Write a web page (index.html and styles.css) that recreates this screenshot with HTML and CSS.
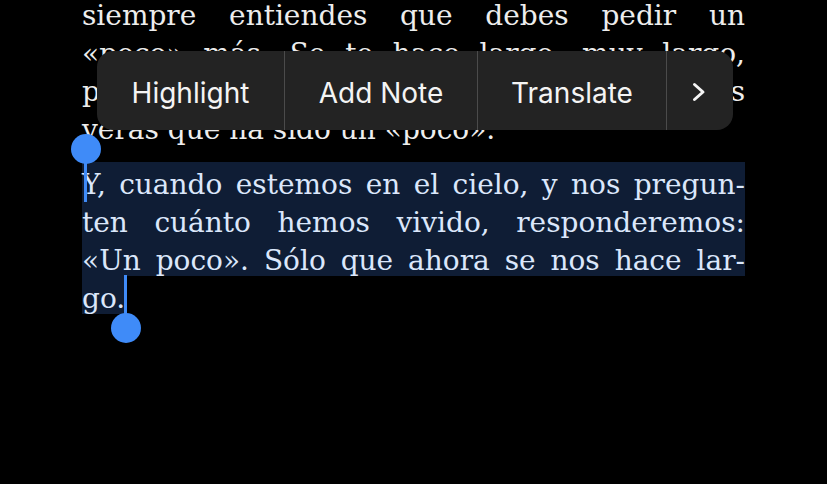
FILE: index.html
```html
<!DOCTYPE html>
<html lang="es">
<head>
<meta charset="utf-8">
<title>Reader selection</title>
<link rel="stylesheet" href="styles.css">
</head>
<body>
<main class="page">
  <p class="para first">
    <span class="line just">siempre entiendes que debes pedir un</span>
    <span class="line just">«poco» más. Se te hace largo, muy largo,</span>
    <span class="line just">pero cuando pase el tiempo y mires atrás</span>
    <span class="line">verás que ha sido un «poco».</span>
  </p>
  <p class="para selected">
    <span class="line sel just">Y, cuando estemos en el cielo, y nos pregun-</span>
    <span class="line sel just">ten cuánto hemos vivido, responderemos:</span>
    <span class="line sel just">«Un poco». Sólo que ahora se nos hace lar-</span>
    <span class="line sel last">go.</span>
  </p>

  <nav class="menu">
    <button class="item item-highlight">Highlight</button>
    <button class="item item-note">Add Note</button>
    <button class="item item-translate">Translate</button>
    <button class="item item-more" aria-label="More">
      <svg width="14" height="20" viewBox="0 0 14 20"><polyline points="2.5,2.5 11,10 2.5,17.5" fill="none" stroke="#f4f4f4" stroke-width="3" stroke-linecap="round" stroke-linejoin="round"/></svg>
    </button>
    <span class="pointer"></span>
  </nav>

  <span class="handle handle-start"><span class="knob"></span><span class="bar"></span></span>
  <span class="handle handle-end"><span class="bar"></span><span class="knob"></span></span>
</main>
</body>
</html>
```

FILE: styles.css
```css
html, body {
  margin: 0;
  padding: 0;
  background: #000;
  height: 100%;
  overflow: hidden;
}

.page {
  position: relative;
  width: 663px;
  padding: 0 82px;
  font-family: "DejaVu Serif", "Liberation Serif", serif;
  font-size: 28px;
  letter-spacing: 0;
  color: #ededed;
}

.para {
  margin: 0;
}

.first {
  margin-top: -3px;
  line-height: 38px;
}

.selected {
  margin-top: 13px;
  color: #dbe7fb;
}

.line {
  display: block;
  white-space: nowrap;
}

.just {
  white-space: normal;
  text-align: justify;
  text-align-last: justify;
}

.sel {
  background: #0f1d35;
  padding-top: 7px;
  line-height: 31px;
}

.sel.last {
  width: fit-content;
  padding-right: 2px;
}

/* context menu */
.menu {
  position: absolute;
  left: 97px;
  top: 54px;
  width: 636px;
  height: 79px;
  display: flex;
  background: #232323;
  border-radius: 16px;
  font-family: Inter, "Noto Sans", sans-serif;
  letter-spacing: 0;
}

.item {
  display: flex;
  align-items: center;
  justify-content: center;
  padding: 5px 0 0;
  border: 0;
  background: none;
  color: #f4f4f4;
  font: inherit;
  font-size: 28px;
  border-right: 1px solid #4b4b4b;
}

.item-highlight { width: 188px; }
.item-note { width: 193px; }
.item-translate { width: 189px; }
.item-more { flex: 1; border-right: 0; padding: 2px 2px 0 0; }

.pointer {
  position: absolute;
  left: 306px;
  top: 123px;
  width: 20px;
  height: 20px;
  background: #232323;
  border-radius: 3px;
  transform: rotate(45deg);
  z-index: -1;
}

/* selection handles */
.handle {
  position: absolute;
  display: flex;
  flex-direction: column;
  align-items: center;
}

.handle-start {
  left: 71px;
  top: 137px;
}

.handle-end {
  left: 111px;
  top: 278px;
}

.knob {
  width: 30px;
  height: 30px;
  border-radius: 50%;
  background: #3f8bf8;
}

.bar {
  width: 3px;
  background: #3f8bf8;
}

.handle-start .bar {
  height: 52px;
  margin-top: -14px;
  margin-left: -1px;
}

.handle-end .bar {
  height: 44px;
  margin-bottom: -6px;
  margin-left: -1px;
}
```
